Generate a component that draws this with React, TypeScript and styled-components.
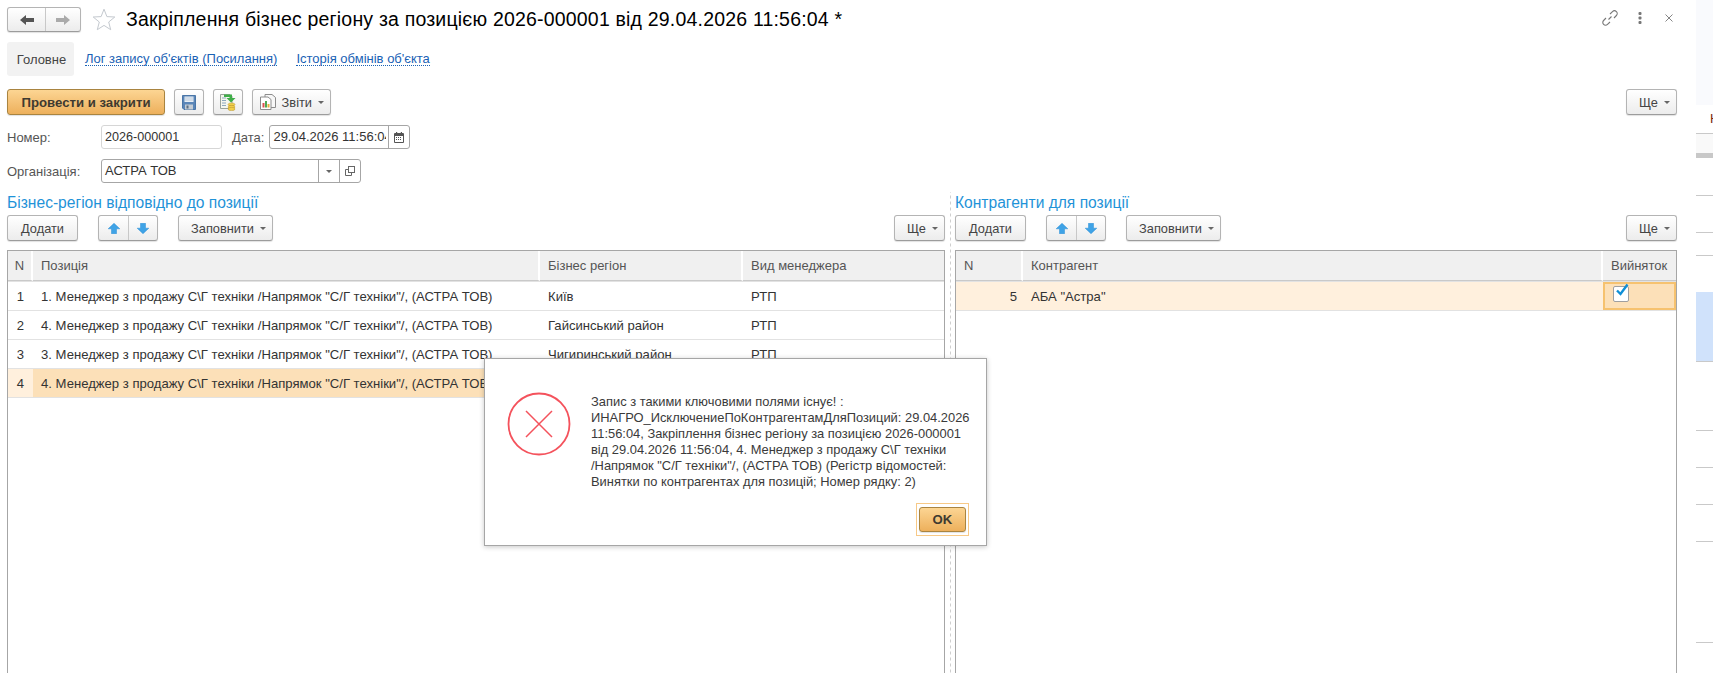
import React from 'react';
import styled, { createGlobalStyle } from 'styled-components';

const GlobalStyle = createGlobalStyle`
  html, body {
    margin: 0;
    padding: 0;
    background: #fff;
  }
  body {
    font-family: "Liberation Sans", Arial, sans-serif;
    font-size: 13px;
    color: #333;
  }
`;

const Page = styled.div`
  position: relative;
  display: flex;
  width: 1713px;
  height: 673px;
  overflow: hidden;
  background: #fff;
`;

const Main = styled.div`
  display: flex;
  flex-direction: column;
  width: 1696px;
  height: 673px;
  box-sizing: border-box;
  padding: 7px 19px 0 7px;
`;

const TitleBar = styled.div`
  display: flex;
  align-items: center;
  height: 25px;
`;

const ButtonGroup = styled.div<{ $ml?: number }>`
  display: flex;
  height: 100%;
  margin-left: ${(p) => p.$ml ?? 0}px;
  box-sizing: border-box;
  border: 1px solid #b4b4b4;
  border-bottom-color: #9c9c9c;
  border-radius: 3px;
  background: linear-gradient(#fff, #ececec);
  box-shadow: 0 1px 1px rgba(0, 0, 0, 0.12);
`;

const GroupCell = styled.div<{ $w: number; $divider?: boolean }>`
  display: flex;
  align-items: center;
  justify-content: center;
  width: ${(p) => p.$w}px;
  box-sizing: border-box;
  border-left: ${(p) => (p.$divider ? '1px solid #c8c8c8' : 'none')};
`;

const StarSlot = styled.div`
  display: flex;
  margin: 0 10px 0 11px;
`;

const Title = styled.div`
  flex: 1;
  font-size: 19.5px;
  letter-spacing: 0.19px;
  color: #000;
  white-space: nowrap;
`;

const WindowTools = styled.div`
  display: flex;
  align-items: center;
  gap: 20px;
  margin: 0 4px 3px 0;
`;

const CloseSlot = styled.div`
  display: flex;
  margin-left: 3px;
`;

const Tabs = styled.div`
  display: flex;
  align-items: center;
  height: 34px;
  margin-top: 10px;
`;

const ActiveTab = styled.div`
  display: flex;
  align-items: center;
  justify-content: center;
  width: 67px;
  height: 34px;
  padding-left: 2px;
  box-sizing: border-box;
  border-radius: 3px;
  background: #f2f2f2;
  font-size: 13px;
  color: #444;
`;

const TabLink = styled.a`
  margin-left: 11px;
  margin-right: 8px;
  font-size: 13px;
  color: #1a62b5;
  border-bottom: 1px dotted #1a62b5;
  line-height: 13px;
`;

const Toolbar = styled.div<{ $top: number }>`
  display: flex;
  align-items: stretch;
  height: 26px;
  margin-top: ${(p) => p.$top}px;
`;

const Button = styled.div<{ $w: number; $ml?: number; $caret?: boolean }>`
  display: flex;
  align-items: center;
  justify-content: ${(p) => (p.$caret ? 'flex-end' : 'center')};
  gap: 6px;
  width: ${(p) => p.$w}px;
  margin-left: ${(p) => p.$ml ?? 0}px;
  padding-right: ${(p) => (p.$caret ? '6px' : '0')};
  box-sizing: border-box;
  border: 1px solid #b4b4b4;
  border-bottom-color: #9c9c9c;
  border-radius: 3px;
  background: linear-gradient(#fff, #ececec);
  box-shadow: 0 1px 1px rgba(0, 0, 0, 0.12);
  font-size: 12.8px;
  color: #444;
  white-space: nowrap;
`;

const PrimaryButton = styled(Button)`
  border-color: #a98440;
  background: linear-gradient(#fcd593, #edb05c);
  font-weight: bold;
  font-size: 13.2px;
  color: #3f3a30;
`;

const Spacer = styled.div`
  flex: 1;
`;

const Caret = styled.span`
  width: 0;
  height: 0;
  border-left: 3.5px solid transparent;
  border-right: 3.5px solid transparent;
  border-top: 3.5px solid #666;
`;

const FormRow = styled.div<{ $top: number }>`
  display: flex;
  align-items: center;
  height: 24px;
  margin-top: ${(p) => p.$top}px;
`;

const Label = styled.div<{ $w?: number; $ml?: number }>`
  width: ${(p) => (p.$w ? `${p.$w}px` : 'auto')};
  margin-left: ${(p) => p.$ml ?? 0}px;
  font-size: 13px;
  color: #555;
`;

const Field = styled.div<{ $w: number; $ml?: number; $light?: boolean }>`
  display: flex;
  align-items: stretch;
  width: ${(p) => p.$w}px;
  height: 24px;
  margin-left: ${(p) => p.$ml ?? 0}px;
  box-sizing: border-box;
  border: 1px solid ${(p) => (p.$light ? '#d6d6d6' : '#a6a6a6')};
  border-radius: 3px;
  background: #fff;
`;

const FieldText = styled.div<{ $size?: number }>`
  flex: 1;
  min-width: 0;
  margin-right: 2px;
  padding-left: 3px;
  overflow: hidden;
  white-space: nowrap;
  font-size: ${(p) => p.$size ?? 13}px;
  line-height: 22px;
  color: #333;
`;

const FieldAddon = styled.div<{ $w: number }>`
  display: flex;
  align-items: center;
  justify-content: center;
  width: ${(p) => p.$w}px;
  box-sizing: border-box;
  border-left: 1px solid #a6a6a6;
`;

const Panels = styled.div`
  display: flex;
  flex: 1;
  min-height: 0;
  margin-top: 9px;
`;

const Panel = styled.div<{ $w?: number }>`
  display: flex;
  flex-direction: column;
  flex: ${(p) => (p.$w ? `0 0 ${p.$w}px` : '1')};
  min-width: 0;
`;

const Divider = styled.div`
  flex: 0 0 10px;
  background: linear-gradient(#cfcfcf 50%, transparent 50%) center / 1px 6px repeat-y;
`;

const SectionTitle = styled.div`
  height: 20px;
  font-size: 15.6px;
  line-height: 22px;
  color: #1f93d8;
  white-space: nowrap;
`;

const Table = styled.div`
  flex: 1;
  margin-top: 9px;
  box-sizing: border-box;
  border: 1px solid #a6a6a6;
  border-bottom: none;
`;

const Row = styled.div<{ $columns: string; $height: number }>`
  display: grid;
  grid-template-columns: ${(p) => p.$columns};
  height: ${(p) => p.$height}px;
  box-sizing: border-box;
  border-bottom: 1px solid #e2e2e2;
`;

const HeaderCell = styled.div`
  display: flex;
  align-items: center;
  padding-left: 8px;
  background: #f0f0f0;
  border-right: 2px solid #fff;
  border-bottom: 1px solid #c9c9c9;
  font-size: 13px;
  color: #555;
  white-space: nowrap;
  &:last-child {
    border-right: none;
  }
`;

const HeaderNumber = styled(HeaderCell)`
  justify-content: center;
  padding-left: 0;
`;

const Cell = styled.div<{ $tone?: 'soft' | 'strong' }>`
  display: flex;
  align-items: center;
  min-width: 0;
  padding: 0 0 0 8px;
  overflow: hidden;
  background: ${(p) =>
    p.$tone === 'strong' ? '#fce0b8' : p.$tone === 'soft' ? '#fff0dd' : 'transparent'};
  font-size: 13.1px;
  color: #333;
  white-space: nowrap;
`;

const NumberCell = styled(Cell)<{ $align?: 'center' | 'right' }>`
  justify-content: ${(p) => (p.$align === 'right' ? 'flex-end' : 'center')};
  padding: ${(p) => (p.$align === 'right' ? '0 6px 0 0' : '0')};
`;

const CheckCell = styled.div`
  padding: 2px 0 0 8px;
  box-sizing: border-box;
  background: #fce0b8;
  border: 2px solid #f6c26f;
`;

const CheckBox = styled.div`
  position: relative;
  width: 14px;
  height: 14px;
  border: 1px solid #9f9f9f;
  border-radius: 2px;
  background: #fff;
`;

const CheckMark = styled.svg`
  position: absolute;
  left: 1px;
  top: -4px;
`;

const Dialog = styled.div`
  position: absolute;
  left: 484px;
  top: 358px;
  display: flex;
  flex-direction: column;
  width: 503px;
  height: 188px;
  box-sizing: border-box;
  padding: 35px 17px 0 22px;
  border: 1px solid #a6a6a6;
  background: #fff;
  box-shadow: 0 1px 5px rgba(0, 0, 0, 0.22);
`;

const DialogBody = styled.div`
  display: flex;
  gap: 20px;
`;

const DialogIcon = styled.svg`
  flex: none;
  margin-top: -2px;
`;

const DialogText = styled.div`
  flex: 1;
  font-size: 12.9px;
  line-height: 16px;
  color: #3a3a3a;
  white-space: nowrap;
`;

const DialogFooter = styled.div`
  display: flex;
  justify-content: flex-end;
  margin-top: 13px;
`;

const FocusFrame = styled.div`
  padding: 3px 2px;
  border: 1px solid #f7c987;
`;

const OkButton = styled(PrimaryButton)`
  height: 25px;
`;

const SideStrip = styled.div`
  display: flex;
  flex-direction: column;
  width: 17px;
  height: 673px;
`;

const StripBand = styled.div<{ $h: number; $bg?: string; $line?: boolean }>`
  height: ${(p) => p.$h}px;
  box-sizing: border-box;
  overflow: hidden;
  background: ${(p) => p.$bg ?? '#fff'};
  border-bottom: ${(p) => (p.$line ? '1px solid #c9c9c9' : 'none')};
`;

const StripLetter = styled.div`
  padding: 6px 0 0 14px;
  font-size: 13px;
  color: #7a2a10;
`;

const leftCols = '25px 507px 203px 1fr';
const rightCols = '67px 580px 1fr';
const position =
  'Менеджер з продажу С\\Г техніки /Напрямок "С/Г техніки"/, (АСТРА ТОВ)';

const leftRows = [
  { n: 1, prefix: 1, region: 'Київ' },
  { n: 2, prefix: 4, region: 'Гайсинський район' },
  { n: 3, prefix: 3, region: 'Чигиринський район' },
  { n: 4, prefix: 4, region: '' },
];

const BackArrow = ({ color, flip }: { color: string; flip?: boolean }) => (
  <svg width="14" height="10" viewBox="0 0 14 10" style={flip ? { transform: 'scaleX(-1)' } : undefined}>
    <path d="M0 5 L6 0 V3 H14 V7 H6 V10 Z" fill={color} />
  </svg>
);

const BlueArrow = ({ down }: { down?: boolean }) => (
  <svg width="12" height="11" viewBox="0 0 12 11" style={down ? { transform: 'scaleY(-1)' } : undefined}>
    <path d="M6 0.3 L11.8 5.8 H8.5 V10.7 H3.5 V5.8 H0.2 Z" fill="#3fa3e6" stroke="#2b8fd6" strokeWidth="0.5" />
  </svg>
);

const Star = () => (
  <svg width="24" height="23" viewBox="0 0 24 23">
    <path
      d="M12 1.2 L14.9 8.6 L22.8 9 L16.7 14 L18.7 21.7 L12 17.4 L5.3 21.7 L7.3 14 L1.2 9 L9.1 8.6 Z"
      fill="none"
      stroke="#c4c9cf"
      strokeWidth="1"
    />
  </svg>
);

const LinkIcon = () => (
  <svg width="16" height="16" viewBox="0 0 16 16" fill="none" stroke="#777" strokeWidth="1.1">
    <path d="M6.5 9.5 L9.5 6.5" />
    <path d="M8 4 L10.5 1.6 a2.7 2.7 0 0 1 3.9 3.9 L12 8" />
    <path d="M8 12 L5.5 14.4 a2.7 2.7 0 0 1 -3.9 -3.9 L4 8" />
  </svg>
);

const DotsIcon = () => (
  <svg width="4" height="12" viewBox="0 0 4 12" fill="#777">
    <rect x="0.5" y="0" width="3" height="3" rx="1" />
    <rect x="0.5" y="4.5" width="3" height="3" rx="1" />
    <rect x="0.5" y="9" width="3" height="3" rx="1" />
  </svg>
);

const CloseIcon = () => (
  <svg width="8" height="8" viewBox="0 0 8 8" stroke="#777" strokeWidth="0.9">
    <path d="M0.5 0.5 L7.5 7.5 M7.5 0.5 L0.5 7.5" />
  </svg>
);

const SaveIcon = () => (
  <svg width="14" height="15" viewBox="0 0 14 15">
    <path d="M0.5 0.5 H13.5 V14.5 H2 L0.5 13 Z" fill="#5b86b8" stroke="#4a76a8" />
    <rect x="2.5" y="1.5" width="9" height="5.5" fill="#e9eff6" />
    <path d="M3 3 H11 M3 5 H11" stroke="#b9c9da" />
    <rect x="3" y="9.5" width="8" height="5" fill="#c4ccd4" />
    <rect x="4.5" y="10.5" width="2" height="3" fill="#5b6f84" />
  </svg>
);

const PostIcon = () => (
  <svg width="17" height="17" viewBox="0 0 17 17">
    <path d="M0.5 0.5 H10 L12 2.5 V14.5 H0.5 Z" fill="#f4f6ee" stroke="#9aa39a" />
    <path d="M2 4 H6 M2 6.5 H6 M2 9 H6 M2 11.5 H6" stroke="#8ca7be" />
    <path d="M4 0.5 H12 V4 H15.5 L11 8.5 L6.5 4 H9.5 V3 H4 Z" fill="#3fae49" />
    <ellipse cx="11.5" cy="10.5" rx="3.5" ry="1.6" fill="#f2cf4c" stroke="#b6932a" strokeWidth="0.5" />
    <ellipse cx="11.5" cy="13" rx="3.5" ry="1.6" fill="#f2cf4c" stroke="#b6932a" strokeWidth="0.5" />
    <ellipse cx="11.5" cy="15" rx="3.5" ry="1.6" fill="#f2cf4c" stroke="#b6932a" strokeWidth="0.5" />
  </svg>
);

const ReportIcon = () => (
  <svg width="16" height="16" viewBox="0 0 16 16">
    <path d="M5 0.5 H12 L15.5 3.5 V13.5 H5 Z" fill="#f7f7f7" stroke="#8c8c8c" />
    <path d="M0.5 3 H8 L11 5.5 V15.5 H0.5 Z" fill="#fff" stroke="#8c8c8c" />
    <rect x="2.5" y="9" width="2" height="4.5" fill="#d9534f" />
    <rect x="5" y="7" width="2" height="6.5" fill="#4dab55" />
    <rect x="7.5" y="10" width="2" height="3.5" fill="#e6b23c" />
  </svg>
);

const CalendarIcon = () => (
  <svg width="10" height="11" viewBox="0 0 10 11">
    <rect x="0" y="1" width="10" height="10" rx="1" fill="#555" />
    <rect x="1" y="4" width="8" height="6" fill="#fff" />
    <rect x="2" y="0" width="1.2" height="2" fill="#555" />
    <rect x="6.8" y="0" width="1.2" height="2" fill="#555" />
    <path d="M2 5.5 H8 M2 7.5 H8" stroke="#555" strokeDasharray="1 1" />
  </svg>
);

const OpenIcon = () => (
  <svg width="10" height="10" viewBox="0 0 10 10" fill="none" stroke="#666">
    <rect x="3.5" y="0.5" width="6" height="6" />
    <path d="M3.5 3.5 H0.5 V9.5 H6.5 V6.5" />
  </svg>
);

const MoreButton = () => (
  <Button $w={51} $caret>
    Ще <Caret />
  </Button>
);

const ListToolbar = () => (
  <Toolbar $top={3}>
    <Button $w={71}>Додати</Button>
    <ButtonGroup $ml={20}>
      <GroupCell $w={29}>
        <BlueArrow />
      </GroupCell>
      <GroupCell $w={29} $divider>
        <BlueArrow down />
      </GroupCell>
    </ButtonGroup>
    <Button $w={95} $ml={20} $caret>
      Заповнити <Caret />
    </Button>
    <Spacer />
    <MoreButton />
  </Toolbar>
);

export default function App() {
  return (
    <Page>
      <GlobalStyle />
      <Main>
        <TitleBar>
          <ButtonGroup>
            <GroupCell $w={37}>
              <BackArrow color="#555" />
            </GroupCell>
            <GroupCell $w={35} $divider>
              <BackArrow color="#aaa" flip />
            </GroupCell>
          </ButtonGroup>
          <StarSlot>
            <Star />
          </StarSlot>
          <Title>Закріплення бізнес регіону за позицією 2026-000001 від 29.04.2026 11:56:04 *</Title>
          <WindowTools>
            <LinkIcon />
            <DotsIcon />
            <CloseSlot>
              <CloseIcon />
            </CloseSlot>
          </WindowTools>
        </TitleBar>

        <Tabs>
          <ActiveTab>Головне</ActiveTab>
          <TabLink>Лог запису об'єктів (Посилання)</TabLink>
          <TabLink>Історія обмінів об'єкта</TabLink>
        </Tabs>

        <Toolbar $top={13}>
          <PrimaryButton $w={158}>Провести и закрити</PrimaryButton>
          <Button $w={30} $ml={9}>
            <SaveIcon />
          </Button>
          <Button $w={30} $ml={9}>
            <PostIcon />
          </Button>
          <Button $w={79} $ml={9} $caret>
            <ReportIcon />
            Звіти
            <Caret />
          </Button>
          <Spacer />
          <MoreButton />
        </Toolbar>

        <FormRow $top={10}>
          <Label $w={94}>Номер:</Label>
          <Field $w={121} $light>
            <FieldText $size={12.6}>2026-000001</FieldText>
          </Field>
          <Label $ml={10}>Дата:</Label>
          <Field $w={141} $ml={5}>
            <FieldText>29.04.2026 11:56:04</FieldText>
            <FieldAddon $w={21}>
              <CalendarIcon />
            </FieldAddon>
          </Field>
        </FormRow>

        <FormRow $top={10}>
          <Label $w={94}>Організація:</Label>
          <Field $w={260}>
            <FieldText>АСТРА ТОВ</FieldText>
            <FieldAddon $w={21}>
              <Caret />
            </FieldAddon>
            <FieldAddon $w={21}>
              <OpenIcon />
            </FieldAddon>
          </Field>
        </FormRow>

        <Panels>
          <Panel $w={938}>
            <SectionTitle>Бізнес-регіон відповідно до позиції</SectionTitle>
            <ListToolbar />
            <Table>
              <Row $columns={leftCols} $height={31}>
                <HeaderNumber>N</HeaderNumber>
                <HeaderCell>Позиція</HeaderCell>
                <HeaderCell>Бізнес регіон</HeaderCell>
                <HeaderCell>Вид менеджера</HeaderCell>
              </Row>
              {leftRows.map((row) => {
                const selected = row.n === 4;
                return (
                  <Row key={row.n} $columns={leftCols} $height={29}>
                    <NumberCell $tone={selected ? 'soft' : undefined}>{row.n}</NumberCell>
                    <Cell $tone={selected ? 'strong' : undefined}>
                      {row.prefix}. {position}
                    </Cell>
                    <Cell>{row.region}</Cell>
                    <Cell>{selected ? '' : 'РТП'}</Cell>
                  </Row>
                );
              })}
            </Table>
          </Panel>

          <Divider />

          <Panel>
            <SectionTitle>Контрагенти для позиції</SectionTitle>
            <ListToolbar />
            <Table>
              <Row $columns={rightCols} $height={31}>
                <HeaderCell>N</HeaderCell>
                <HeaderCell>Контрагент</HeaderCell>
                <HeaderCell>Вийняток</HeaderCell>
              </Row>
              <Row $columns={rightCols} $height={29}>
                <NumberCell $tone="soft" $align="right">
                  5
                </NumberCell>
                <Cell $tone="soft">АБА "Астра"</Cell>
                <CheckCell>
                  <CheckBox>
                    <CheckMark width="15" height="15" viewBox="0 0 15 15">
                      <path d="M2 7.5 L5.5 11 L12.5 1.5" fill="none" stroke="#0f8fd6" strokeWidth="2.4" />
                    </CheckMark>
                  </CheckBox>
                </CheckCell>
              </Row>
            </Table>
          </Panel>
        </Panels>
      </Main>

      <SideStrip>
        <StripBand $h={105} $bg="#f9fafd" />
        <StripBand $h={29} $line>
          <StripLetter>Н</StripLetter>
        </StripBand>
        <StripBand $h={19} $bg="#f9f9f9" />
        <StripBand $h={5} $bg="#c8c8c8" />
        <StripBand $h={38} $line />
        <StripBand $h={37} $line />
        <StripBand $h={23} $line />
        <StripBand $h={36} />
        <StripBand $h={70} $bg="#d0e2fb" $line />
        <StripBand $h={69} $line />
        <StripBand $h={37} $line />
        <StripBand $h={37} $line />
        <StripBand $h={37} $line />
        <StripBand $h={101} $line />
      </SideStrip>

      <Dialog>
        <DialogBody>
          <DialogIcon width="64" height="64" viewBox="0 0 64 64">
            <circle cx="32" cy="32" r="30.5" fill="none" stroke="#f4525c" strokeWidth="1.8" />
            <path d="M19 19 L45 45 M45 19 L19 45" stroke="#f4525c" strokeWidth="1.5" />
          </DialogIcon>
          <DialogText>
            Запис з такими ключовими полями існує! :
            <br />
            ИНАГРО_ИсключениеПоКонтрагентамДляПозиций: 29.04.2026
            <br />
            11:56:04, Закріплення бізнес регіону за позицією 2026-000001
            <br />
            від 29.04.2026 11:56:04, 4. Менеджер з продажу С\Г техніки
            <br />
            /Напрямок "С/Г техніки"/, (АСТРА ТОВ) (Регістр відомостей:
            <br />
            Винятки по контрагентах для позицій; Номер рядку: 2)
          </DialogText>
        </DialogBody>
        <DialogFooter>
          <FocusFrame>
            <OkButton $w={47}>OK</OkButton>
          </FocusFrame>
        </DialogFooter>
      </Dialog>
    </Page>
  );
}
